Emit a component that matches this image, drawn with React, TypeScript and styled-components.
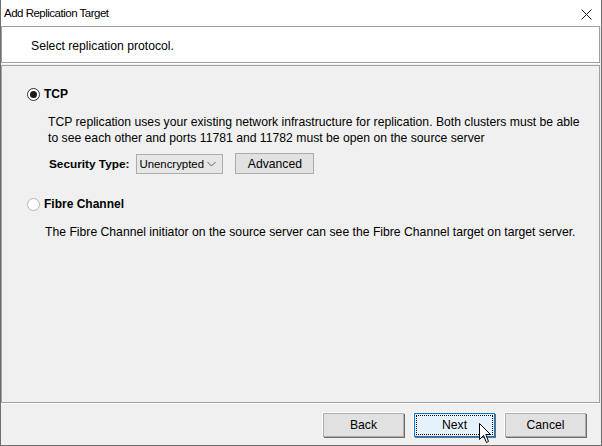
import styled, { createGlobalStyle } from 'styled-components';

const Global = createGlobalStyle`
  html, body {
    margin: 0;
    padding: 0;
    background: #f0f0f0;
  }
  * {
    box-sizing: border-box;
  }
`

interface RadioProps {
  checked?: boolean;
}

interface ButtonProps {
  focused?: boolean;
}

const Radio = ({ checked }: RadioProps) => (
  <RadioCircle checked={checked}>
    {checked && <RadioDot />}
  </RadioCircle>
)

const Cursor = () => (
  <CursorWrap>
    <svg width="13" height="21" viewBox="0 0 13 21">
      <path
        d="M0.5 0.5 L0.5 16.5 L4.5 12.5 L7.5 19.5 L9.5 18.5 L6.8 11.5 L11.5 11.5 Z"
        fill="#fff"
        stroke="#000"
        strokeWidth="1"
        strokeLinejoin="miter"
      />
    </svg>
  </CursorWrap>
)

const CloseIcon = () => (
  <svg width="11" height="11" viewBox="0 0 11 11">
    <path d="M0.5 0.5 L10.5 10.5 M10.5 0.5 L0.5 10.5" stroke="#1a1a1a" strokeWidth="1" />
  </svg>
)

const Chevron = () => (
  <svg width="9" height="6" viewBox="0 0 9 6">
    <path d="M0.5 1 L4.5 5 L8.5 1" stroke="#606060" strokeWidth="1" fill="none" />
  </svg>
)

export default function App() {
  return (
    <>
      <Global />
      <Window>
        <TitleBar>
          <TitleText>Add Replication Target</TitleText>
          <CloseButton><CloseIcon /></CloseButton>
        </TitleBar>
        <Header>Select replication protocol.</Header>
        <Content>
          <OptionRow>
            <Radio checked />
            <OptionLabel>TCP</OptionLabel>
          </OptionRow>
          <Description indent={48} gapTop={13}>
            TCP replication uses your existing network infrastructure for replication. Both clusters must be able
            <br />
            to see each other and ports 11781 and 11782 must be open on the source server
          </Description>
          <SecurityRow>
            <FieldLabel>Security Type:</FieldLabel>
            <Combo>
              <span>Unencrypted</span>
              <Chevron />
            </Combo>
            <SmallButton>Advanced</SmallButton>
          </SecurityRow>
          <OptionRow second>
            <Radio />
            <OptionLabel>Fibre Channel</OptionLabel>
          </OptionRow>
          <Description indent={45} gapTop={13}>
            The Fibre Channel initiator on the source server can see the Fibre Channel target on target server.
          </Description>
        </Content>
        <Footer>
          <DialogButton>Back</DialogButton>
          <DialogButton focused>
            Next
            <Cursor />
          </DialogButton>
          <DialogButton>Cancel</DialogButton>
        </Footer>
      </Window>
    </>
  )
}

const Window = styled.div`
  width: 602px;
  height: 446px;
  display: flex;
  flex-direction: column;
  background: #f0f0f0;
  border-left: 1px solid #6e6e6e;
  border-right: 1px solid #6e6e6e;
  border-bottom: 1px solid #6e6e6e;
  font-family: "Liberation Sans", Arial, sans-serif;
  font-size: 12.2px;
  color: #000;
`

const TitleBar = styled.div`
  height: 26px;
  flex: none;
  background: #fff;
  display: flex;
  align-items: center;
  justify-content: space-between;
  padding-left: 3px;
  padding-right: 9px;
  margin-left: -1px;
  margin-right: -1px;
  border-left: 1px solid #6e6e6e;
  border-right: 1px solid #6e6e6e;
`

const TitleText = styled.span`
  font-size: 11.5px;
  letter-spacing: -0.5px;
  color: #000;
`

const CloseButton = styled.span`
  display: flex;
  align-items: center;
  margin-top: 3px;
`

const Header = styled.div`
  height: 37px;
  flex: none;
  margin-right: 1px;
  background: #fff;
  border: 1px solid #a0a0a0;
  box-shadow: 0 1px 0 #fff;
  display: flex;
  align-items: center;
  padding-left: 29px;
  padding-top: 2px;
`

const Content = styled.div`
  flex: 1;
  margin-top: 2px;
  margin-right: 1px;
  border: 1px solid #a0a0a0;
  box-shadow: 0 1px 0 #fff;
  background: #f0f0f0;
  display: flex;
  flex-direction: column;
  padding-top: 21px;
`

const OptionRow = styled.div<{ second?: boolean }>`
  display: flex;
  align-items: center;
  gap: 4px;
  height: 14px;
  padding-left: 25px;
  margin-top: ${p => (p.second ? '23px' : '0')};
`

const RadioCircle = styled.span<RadioProps>`
  width: 13px;
  height: 13px;
  border-radius: 50%;
  border: 1px solid ${p => (p.checked ? '#333' : '#b5b5b5')};
  background: #fff;
  display: flex;
  align-items: center;
  justify-content: center;
  flex: none;
`

const RadioDot = styled.span`
  width: 7px;
  height: 7px;
  border-radius: 50%;
  background: #1a1a1a;
`

const OptionLabel = styled.span`
  font-weight: bold;
  font-size: 12px;
`

const Description = styled.div<{ indent: number; gapTop: number }>`
  margin-top: ${p => p.gapTop}px;
  padding-left: ${p => p.indent - 2}px;
  line-height: 16px;
  white-space: nowrap;
`

const SecurityRow = styled.div`
  display: flex;
  align-items: center;
  margin-top: 7px;
  padding-left: 47px;
  height: 21px;
`

const FieldLabel = styled.span`
  font-weight: bold;
  font-size: 11.8px;
  margin-right: 7px;
`

const Combo = styled.div`
  width: 87px;
  height: 20px;
  border: 1px solid #adadad;
  background: #e6e6e6;
  display: flex;
  align-items: center;
  justify-content: space-between;
  padding: 0 6px 0 2px;
  font-size: 11.4px;
`

const SmallButton = styled.div`
  width: 79px;
  height: 21px;
  margin-left: 12px;
  border: 1px solid #adadad;
  background: #e1e1e1;
  display: flex;
  align-items: center;
  justify-content: center;
`

const Footer = styled.div`
  height: 42px;
  flex: none;
  display: flex;
  justify-content: flex-end;
  gap: 10px;
  padding-top: 10px;
  padding-right: 15px;
`

const DialogButton = styled.div<ButtonProps>`
  position: relative;
  width: 81px;
  height: 24px;
  display: flex;
  align-items: center;
  justify-content: center;
  background: ${p => (p.focused ? '#e5f1fb' : '#e1e1e1')};
  border: 1px solid ${p => (p.focused ? '#0078d7' : '#adadad')};
  box-shadow: 1px 1px 0 #6d6d6d, -1px -1px 0 #ffffff;
  outline: ${p => (p.focused ? '1px dotted #000' : 'none')};
  outline-offset: -3px;
`

const CursorWrap = styled.span`
  position: absolute;
  left: 64px;
  top: 9px;
  display: flex;
  pointer-events: none;
`
